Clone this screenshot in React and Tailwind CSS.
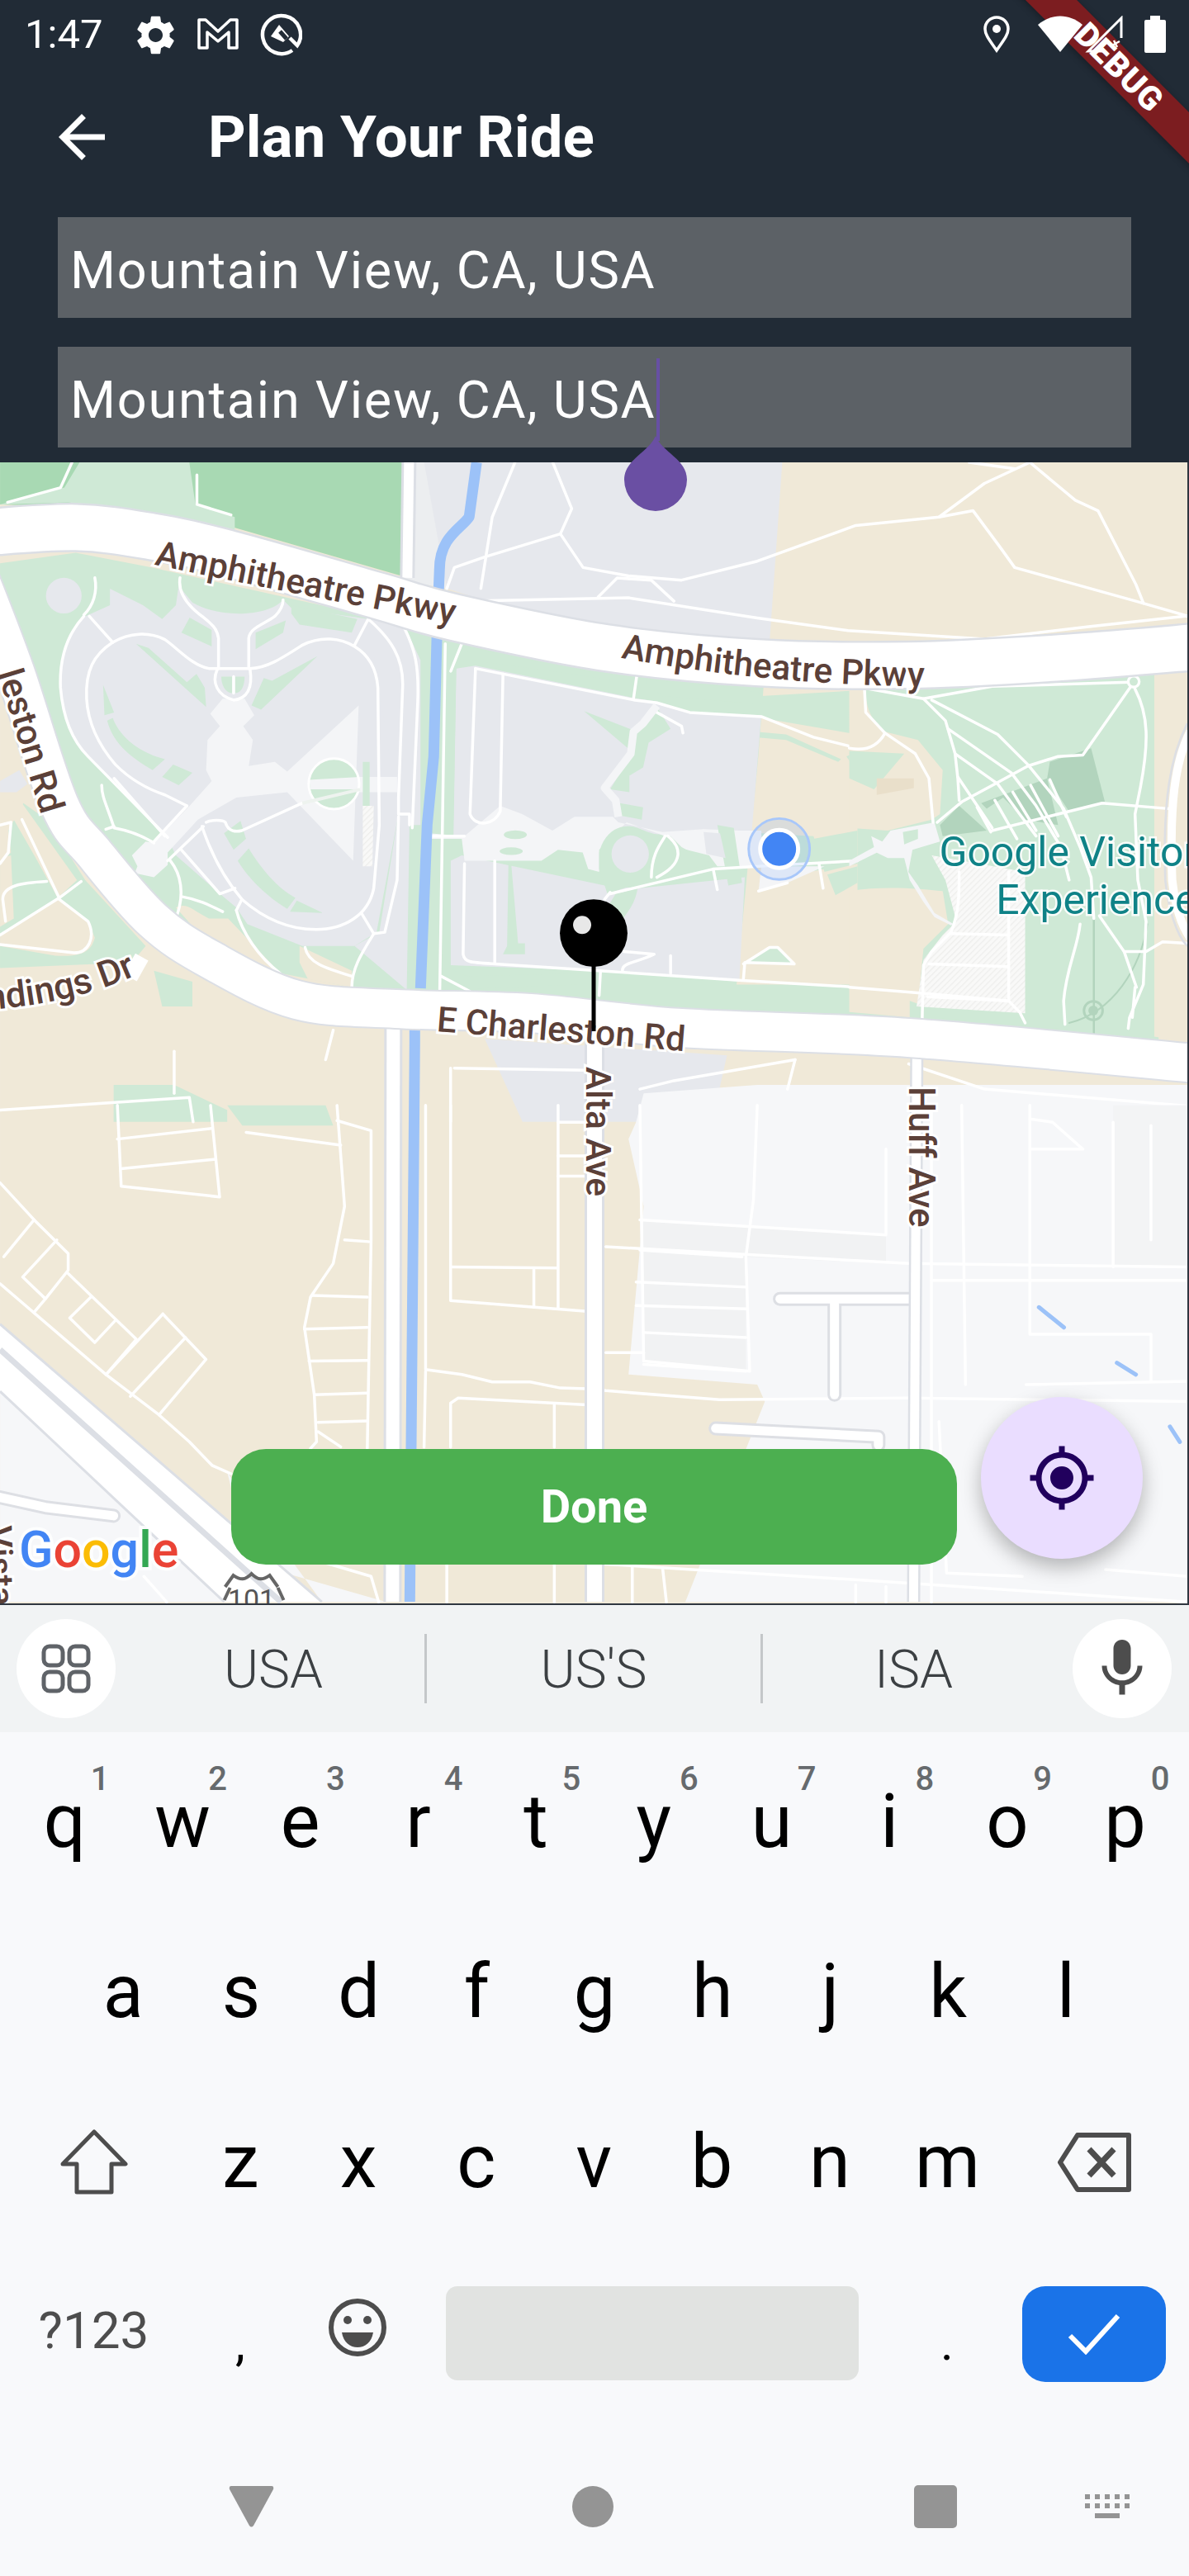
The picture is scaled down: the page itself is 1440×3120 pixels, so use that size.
import { MdArrowBack, MdMic, MdMyLocation, MdSettings } from 'react-icons/md'

const topRow = [['q', 1], ['w', 2], ['e', 3], ['r', 4], ['t', 5], ['y', 6], ['u', 7], ['i', 8], ['o', 9], ['p', 0]]
const midRow = ['a', 's', 'd', 'f', 'g', 'h', 'j', 'k', 'l']
const lowRow = ['z', 'x', 'c', 'v', 'b', 'n', 'm']

const GREEN = '#cfe9d6'
const GREY = '#e6e8ed'
const TAN = '#f0e9d8'
const PLAZA = '#f4f5f7'
const DARK = '#b2d4bd'

// catmull-rom through the points, keeps the big roads from looking polygonal
function smooth(pts) {
  let d = `M${pts[0][0]} ${pts[0][1]}`
  for (let i = 0; i < pts.length - 1; i++) {
    const p0 = pts[i - 1] || pts[i]
    const p1 = pts[i]
    const p2 = pts[i + 1]
    const p3 = pts[i + 2] || p2
    const c1 = [p1[0] + (p2[0] - p0[0]) / 6, p1[1] + (p2[1] - p0[1]) / 6]
    const c2 = [p2[0] - (p3[0] - p1[0]) / 6, p2[1] - (p3[1] - p1[1]) / 6]
    d += ` C${c1[0]} ${c1[1]} ${c2[0]} ${c2[1]} ${p2[0]} ${p2[1]}`
  }
  return d
}

const amphitheatre = smooth([[-20, 645], [92, 639], [184, 650], [275, 670], [459, 722], [551, 748], [735, 785], [918, 803], [1102, 806], [1286, 797], [1460, 783]])
const charleston = smooth([[-25, 700], [18, 813], [72, 975], [115, 1035], [185, 1115], [255, 1163], [360, 1212], [480, 1223], [643, 1228], [826, 1246], [1102, 1258], [1460, 1290]])

// above amphitheatre and below charleston, 1568x1568 crop of y 560-1360
const upperThin = [
  'M730 0 L755 110 L740 170 L770 250 L830 270 L900 280 L1000 235 L1130 150 L1240 130 L1285 115 L1320 200 L1340 250 L1500 330 L1568 365',
  'M1240 130 L1300 50 L1360 0',
  'M1360 0 L1420 90 L1450 115 L1500 290 L1510 335',
  'M1280 0 L1340 15',
  'M740 170 L640 225 L600 250 L590 300',
  'M680 0 L650 130 L635 300',
  'M790 320 L815 275 L860 280 L890 330',
  'M620 330 L830 322 L1000 370 L1120 400 L1300 420 L1440 390 L1568 365',
  'M95 0 L80 60 L10 95',
  'M260 30 L260 100 L305 125',
  'M600 1440 L775 1445',
  'M595 1440 L595 1568',
  'M440 1350 L430 1420',
  'M230 1400 L230 1500',
  'M0 1540 L250 1510 L255 1568',
  'M1200 1430 L1300 1490 L1568 1530',
  'M845 1490 L890 1470 L1050 1420',
  'M1050 1420 L1040 1490',
]

// west campus, 3x crop at (0,700)
const westFills = [
  ['M85 820 L170 880 L310 1100 L530 1340 L480 1400 L0 1420 L0 1040 L40 1000 L30 920Z', GREEN],
  ['M0 800 L80 820 L280 1100 L210 1165 L130 1020 L50 880 L0 860Z', TAN],
  ['M0 1300 L210 1170 L320 1250 L345 1310 C330 1370 280 1380 200 1375 L0 1340Z', TAN],
  ['M0 1020 L40 1010 L50 1240 L0 1270Z', TAN],
  ['M560 1430 L700 1470 L700 1560 L590 1560Z', GREEN],
  ['M0 740 L70 700 L100 750 L60 780 L0 780Z', GREY],
  ['M310 140 C250 190 215 260 220 400 C230 520 280 610 340 670 L600 930 L640 1010 L800 1150 L860 1200 L900 1260 L1100 1340 L1290 1340 L1370 1290 L1450 860 L1470 350 L1340 150 L1060 110 L1030 80 C980 140 800 150 700 90 L650 30 L640 100 L590 150 L520 100 L400 40 L400 100Z', GREY],
  ['M1340 150 L1470 170 L1530 300 L1530 900 L1490 900 L1480 1500 L1290 1340 L1380 1290 L1450 860Z', GREY],
  ['M640 1200 C680 1180 700 1210 760 1240 L830 1240 L1020 1440 L900 1400 L720 1290Z', TAN],
  ['M1090 1340 L1280 1430 L1280 1490 L1120 1460 L1090 1400Z', TAN],
  ['M660 200 L690 145 L770 190 L770 250Z', GREEN],
  ['M930 200 L1040 155 L1030 200 L930 260Z', GREEN],
  ['M1060 100 L1300 150 L1280 200 L1090 170 L1060 130Z', GREEN],
  ['M495 240 L540 255 L680 380 L715 350 L745 400 L750 470Z', GREEN],
  ['M1155 285 L990 375 L960 365 L915 465 L950 480Z', GREEN],
  ['M805 360 L845 360 L845 420 C820 420 805 390 805 360Z', GREEN],
  ['M855 360 L890 360 C890 390 880 420 855 420Z', GREEN],
  ['M375 390 L415 490 L380 500Z', GREEN],
  ['M390 520 L410 510 C440 590 520 640 600 660 L555 700 C470 650 410 600 390 520Z', GREEN],
  ['M630 680 L700 710 L650 755 L590 725Z', GREEN],
  ['M815 930 L875 885 L895 950 L850 990Z', GREEN],
  ['M905 985 C950 1060 1010 1130 1075 1165 L1045 1205 C970 1160 900 1090 865 1030Z', GREEN],
  ['M1080 1175 L1175 1220 L1055 1215Z', GREEN],
  ['M810 440 L890 440 L925 500 L885 540 L920 590 L905 685 L1000 670 L1045 705 L1305 465 L1285 1030 L1045 780 L860 800 L720 880 L610 1000 L610 1045 L560 1090 L490 1075 L500 1050 L480 1010 L530 960 L560 965 L690 830 L770 740 L750 700 L755 590 L800 540 L765 495Z', PLAZA],
  ['M1300 725 L1445 725 L1445 780 L1300 780Z', PLAZA],
  ['M1320 830 L1360 830 L1355 1050 L1320 1050Z', 'url(#hatch)'],
  ['M1320 670 L1345 670 L1345 830 L1320 830Z', GREEN],
]

const westThin = [
  'M410 235 C470 200 540 195 600 225 C650 260 700 320 760 330 L910 330 C970 330 1030 290 1100 245 C1170 210 1240 220 1290 250 C1340 280 1370 330 1375 400 L1380 900 L1360 1130 C1340 1230 1250 1280 1150 1280 C1050 1280 960 1240 880 1170 C820 1100 770 1010 735 905',
  'M410 235 C340 280 310 340 315 440 C320 530 360 610 420 680 C480 740 540 770 600 790 L680 830',
  'M305 140 C250 200 215 280 220 400 C230 520 270 600 320 650 L610 945',
  'M325 140 L410 235',
  'M345 0 C355 50 340 100 305 135',
  'M795 330 L795 220 C790 170 740 150 700 110 C660 70 650 30 655 0',
  'M905 330 L905 220 C910 180 960 170 1000 140 C1030 110 1030 90 1030 80',
  'M790 335 C770 380 790 430 850 445 C900 440 920 400 910 335',
  'M850 360 L850 420',
  'M1290 245 L1340 150 C1420 220 1470 290 1465 400 L1450 800 L1450 860',
  'M1470 180 C1510 260 1525 320 1520 450 L1500 910',
  'M1450 860 L1490 860 L1490 900',
  'M1450 870 L1445 1100 L1400 1290 L1360 1295 L1315 1220',
  'M1360 1295 C1320 1360 1280 1420 1280 1490',
  'M1110 1345 C1120 1400 1180 1420 1280 1450',
  'M860 1210 L880 1170',
  'M860 1210 C880 1290 940 1380 1020 1440',
  'M740 905 L610 1030',
  'M660 990 L800 1150 L855 1130',
  'M620 1030 C660 1080 670 1150 645 1225',
  'M660 1160 C720 1170 760 1190 810 1215',
  'M370 755 C370 800 390 830 415 910 C470 920 520 940 560 965',
  'M385 915 L415 905',
  'M415 730 L600 940',
  'M560 960 L680 830',
  'M750 890 C770 880 810 880 820 890 C830 925 860 925 880 920 L1100 820',
  'M0 900 L40 890 L30 1000 L0 1040',
  'M80 880 L215 1165 L295 1105',
  'M215 1165 L0 1300',
  'M215 1170 L320 1250 C350 1310 320 1365 270 1365 L0 1335',
  'M20 1250 L10 1170 C10 1120 80 1110 170 1105',
]

// central campus, 3x crop at (520,780)
const centralFills = [
  ['M1230 0 L1560 0 L1560 1240 L1120 1240 L1200 400Z', TAN],
  ['M1210 190 L1560 170 L1560 330 L1210 270Z', GREEN],
  ['M1070 310 L1300 330 L1500 420 L1490 430 L1300 350 L1070 330Z', GREEN],
  ['M1520 410 L1560 390 L1560 470Z', GREEN],
  ['M1400 710 L1560 680 L1560 800 L1440 830Z', GREEN],
  ['M1450 840 L1560 810 L1560 870 L1480 915Z', GREEN],
  ['M100 90 L170 80 L760 200 L830 210 L950 250 L1210 260 L1175 690 L90 700Z', GREY],
  ['M80 790 L120 770 L640 880 L760 890 L1150 850 L1130 1230 L700 1190 L620 1190 L80 1170Z', GREY],
  ['M100 30 L170 30 L100 90 L90 640 L50 640 L60 100Z', GREEN],
  ['M130 10 L720 100 L650 175 L660 130 L160 60Z', GREEN],
  ['M790 110 L1210 180 L1210 220 L850 190 L790 150Z', GREEN],
  ['M50 720 L120 720 L70 770 L70 1180 L140 1210 L540 1200 L540 1240 L50 1260Z', GREEN],
  ['M290 790 L420 790 L400 800 L300 800 L325 1090 L350 1090 L350 1130 L270 1130 L285 1100Z', GREEN],
  ['M565 245 L745 315 L730 385Z', GREEN],
  ['M830 230 L880 310 L800 360 L780 450 L730 480 L730 540 L660 530 L740 400 L745 315Z', GREEN],
  ['M695 580 L780 595 L775 640 L695 625Z', GREEN],
  ['M0 690 L130 700 L260 590 L340 620 L450 680 L530 630 L670 630 L690 650 L850 685 L1000 675 L1130 680 L1210 680 L1220 810 L1050 810 L1020 770 L900 740 L860 700 L720 650 L620 750 L620 830 L580 820 L560 760 L470 750 L410 790 L230 790 L130 790 L120 710 L0 710Z', PLAZA],
  ['M620 760 C640 680 700 650 760 670 C830 700 860 700 880 700 L920 740 L1030 800 L800 860 L650 910 L620 820Z', GREEN],
  ['M680 910 L760 890 C750 950 720 980 700 1010 L650 960Z', GREEN],
  ['M1050 660 L1110 670 L1140 870 L1090 880Z', GREEN],
  ['M1000 685 L1060 690 L1080 780 L1010 765Z', GREY],
  ['M1145 1165 L1240 1105 L1270 1105 L1330 1165Z', GREEN],
  ['M1210 690 L1400 700 L1440 820 L1230 860Z', GREEN],
  ['M1210 810 L1400 810 L1440 810 L1305 870 L1200 900Z', PLAZA],
]

const centralThin = [
  'M170 90 L150 620 C170 670 240 660 260 610 L270 110',
  'M170 90 L750 205 L830 215 L950 250 L1210 265 L1400 340 L1560 380',
  'M760 95 L745 200',
  'M830 250 L920 300 L925 325',
  'M660 910 L1035 820 L1200 810 L1560 790',
  'M640 930 L660 905',
  'M130 800 L125 1130 C130 1160 150 1160 240 1165 L620 1190 L1140 1225 L1560 1250',
  'M240 790 L240 1160',
  'M880 1135 L880 1200',
  'M705 1190 C700 1160 760 1160 820 1130 L710 1120',
  'M0 700 L130 700',
  'M60 0 L50 640 L40 1260',
  'M120 0 L80 100',
  'M45 1210 L150 1265',
  'M625 1190 L620 1280',
  'M1145 1165 L1240 1105 L1270 1105 L1330 1165 L1150 1160 L1145 1220',
  'M1035 820 L1050 895',
  'M1200 900 L1305 870',
  'M1420 800 L1435 890',
  'M810 850 C810 760 850 720 860 700',
  'M870 700 C920 740 930 800 830 850',
]

// visitor centre, 3x crop at (1030,800)
const eastFills = [
  ['M0 100 L60 110 C60 200 100 230 130 260 L250 290 L340 400 L330 560 L300 580 L140 620 L0 610Z', TAN],
  ['M0 330 L200 340 L90 470 L0 430Z', GREEN],
  ['M100 430 L235 430 L235 465 L100 490Z', '#e9dfca'],
  ['M0 840 C120 820 250 830 340 840 L360 960 L270 1050 L250 1250 L220 1240 L220 1300 L0 1280Z', TAN],
  ['M1110 45 L1230 30 L1230 1390 L1110 1370Z', TAN],
  ['M730 370 L880 320 L930 515 L800 550 L720 430Z', DARK],
  ['M480 520 L720 430 L760 600 L640 580 L560 500 L500 540Z', DARK],
  ['M330 600 L400 530 L500 620 L340 640Z', DARK],
  ['M300 710 L640 770 L640 1285 L245 1260 L270 1090 L340 1000 L390 950 L350 800Z', 'url(#hatch)'],
  ['M150 620 L310 590 L330 660 L230 690 L215 770 L250 820 L280 870 L310 920 L380 960 L370 965 L310 935 L270 880 L220 800 L200 720 L140 720 L100 700 L0 750 L0 730 L90 680 L80 640 L120 660Z', PLAZA],
  ['M195 625 L250 615 L250 650 L200 670Z', GREEN],
]

const eastThin = [
  'M50 100 L270 140 L520 95 L1020 80',
  'M270 140 L350 220 L385 340 L395 430 L400 510',
  'M300 145 L540 270 L650 380 L780 540 L840 680 L880 790 L890 940',
  'M360 250 L590 410 L680 530 L770 680 L800 800',
  'M385 340 L540 450 L620 560 L680 640',
  'M395 425 L520 610',
  'M320 590 L410 515 L530 450 L650 385 L760 350 L850 345 L1025 95',
  'M1040 105 C1090 200 1090 300 1060 460 L1040 560 L1050 800 L1080 950 L1070 1180 L1020 1300 L1015 1340',
  'M520 620 L720 570 L920 520 L1160 540',
  'M465 535 L515 625',
  'M530 510 L610 650',
  'M595 480 L680 620',
  'M660 455 L760 640',
  'M730 435 L790 570',
  'M910 930 L1000 1060 L1045 1190',
  'M1000 1060 L1080 1060 L1140 1025 L1230 1030',
  'M840 960 C830 1050 790 1120 780 1240 L785 1325',
  'M1040 1190 L1030 1300',
  'M55 100 L60 190 L130 265 L240 340 L290 430 L305 590',
  'M130 265 C100 320 50 330 0 320',
  'M0 1190 L240 1210 L580 1240 L620 1280 L640 1320',
  'M370 995 L580 1000',
  'M290 1105 L580 1115',
  'M285 1225 L580 1240',
  'M580 770 L580 1240',
  'M400 770 C400 850 400 920 370 990 L300 1060 L270 1110 L265 1320',
]

// south of charleston, 1568x1568 crop of y 1340-1980
const lowerThin = [
  'M155 0 L160 240 L290 272 L278 0',
  'M155 100 L280 68',
  'M160 188 L285 160',
  'M325 80 L450 118',
  'M445 45 L490 75 L490 400 L485 1020',
  'M445 0 L455 300 L440 470 L410 570 L402 660 L415 860 L418 1000 L410 1020',
  'M455 400 L487 405',
  'M412 565 L485 570',
  'M402 665 L485 660',
  'M408 760 L485 758',
  'M415 860 L485 855',
  'M420 942 L485 938',
  'M420 970 L450 1015',
  'M0 230 L45 340 L90 440 L90 490 L60 575 L45 615',
  'M45 340 L5 450',
  'M75 400 L30 510 L60 575',
  'M0 530 L140 800 L210 920 L250 1000 L280 1070 L305 1095',
  'M90 500 L180 695 L140 800',
  'M120 570 L92 632 L125 705 L152 640',
  'M215 620 L140 800',
  'M215 620 L272 755 L210 920',
  'M245 690 L172 865',
  'M595 0 L595 580 L775 612',
  'M595 480 L735 483',
  'M705 485 L705 600',
  'M737 0 L737 605',
  'M737 50 L775 50',
  'M737 150 L775 150',
  'M737 210 L775 210',
  'M562 0 L562 785 L610 800 L650 822 L700 822 L740 840 L775 842 L800 848 L950 875 L1200 870 L1568 880',
  'M562 790 L560 1016',
  'M595 1016 L595 885 L605 870 L775 890',
  'M732 890 L732 1016',
  'M590 1360 L590 1476',
  'M732 1360 L732 1476',
  'M775 1360 L1200 1420 L1568 1476',
  'M835 1365 L835 1476',
  'M875 1375 L880 1476',
  'M800 420 L1200 470 L1568 480',
  'M800 735 L850 735',
  'M845 340 L1170 385',
  'M845 430 L980 450',
  'M840 525 L985 540',
  'M840 595 L985 605',
  'M850 675 L985 690',
  'M850 770 L985 790',
  'M845 0 L850 760 L990 790 L985 450 L995 280 L1000 0',
  'M1170 130 L1170 380',
  'M1230 0 L1230 1476',
  'M1270 0 L1275 830',
  'M1360 0 L1360 680 L1520 680 L1520 820',
  'M1470 50 L1470 480',
  'M1520 60 L1520 400',
  'M1360 40 L1390 50 L1430 130 L1360 130',
  'M1240 940 L1250 1390 L1350 1400',
  'M1460 1380 L1568 1400',
  'M1130 1425 L1130 1476',
  'M1170 1430 L1170 1476',
  'M1230 520 L1568 520',
  'M1355 830 L1568 820',
  'M430 1360 L490 1400 L500 1476',
  'M190 1400 L220 1476',
]

function Lines({ paths, width = 3.5, color = '#ffffff' }) {
  return (
    <g fill="none" strokeLinecap="round" strokeLinejoin="round">
      {paths.map((d, i) => (
        <path key={i} d={d} stroke={color} strokeWidth={width} vectorEffect="non-scaling-stroke" />
      ))}
    </g>
  )
}

function Fills({ shapes }) {
  return shapes.map(([d, color], i) => <path key={i} d={d} fill={color} />)
}

function MapLayer() {
  const zoomUpper = 'translate(0 560) scale(0.9184 0.5102)'
  const zoomLower = 'translate(0 1340) scale(0.9184 0.408)'
  const labelStyle = { paintOrder: 'stroke', fontFamily: 'Roboto, sans-serif' }
  return (
    <svg viewBox="0 560 1440 1384" className="block h-full w-full">
      <defs>
        <path id="amph1" d="M187 684 Q340 716 560 758" />
        <path id="amph2" d="M753 797 Q930 830 1130 832" />
        <path id="charl" d="M529 1250 L840 1275" />
        <path id="dings" d="M-16 1224 Q100 1216 186 1172" />
        <pattern id="hatch" width="15" height="15" patternUnits="userSpaceOnUse" patternTransform="rotate(-45)">
          <rect width="15" height="15" fill="#f9f9f8" />
          <rect width="15" height="4" fill="#eeeeec" />
        </pattern>
      </defs>
      <rect x="0" y="560" width="1440" height="1384" fill={TAN} />

      <g transform={zoomUpper}>
        <polygon points="0,0 540,0 530,270 300,150 180,110 0,100" fill="#a8d9b3" />
        <polygon points="85,60 105,0 250,0 258,100 310,130 310,160 200,120 90,95 0,100 10,95" fill={GREEN} />
        <polygon points="555,0 1033,0 1015,460 800,420 590,300" fill={GREY} />
        <polygon points="540,0 560,0 590,300 530,280" fill="#eceef0" />
        <polygon points="0,240 100,215 200,250 500,370 800,470 1000,530 1200,540 1530,500 1530,1375 1200,1340 800,1290 500,1260 300,1190 150,950 60,700 0,300" fill={GREEN} />
        <polygon points="150,1480 230,1480 300,1540 300,1568 150,1568" fill={GREEN} />
        <polygon points="640,1370 960,1410 950,1490 840,1568 690,1568" fill={GREY} />
        <polygon points="850,1500 1000,1480 1568,1480 1568,1568 840,1568" fill="#f6f7f9" />
        <Lines paths={upperThin} />
      </g>

      <g transform="translate(0 700) scale(0.3333)">
        <Fills shapes={westFills} />
        <circle cx="232" cy="65" r="65" fill={GREY} />
        <circle cx="1215" cy="750" r="90" fill={GREEN} />
        <path d="M1125 735 L1310 725 L1310 770 L1130 770Z" fill={PLAZA} />
        <circle cx="1215" cy="750" r="92" fill="none" stroke="#ffffff" strokeWidth="9" />
        <Lines paths={westThin} />
        <path d="M1100 820 L1310 770" stroke="#eef3ef" strokeWidth="12" />
      </g>

      <g transform="translate(520 780) scale(0.3333)">
        <Fills shapes={centralFills} />
        <circle cx="733" cy="765" r="68" fill={GREY} />
        <ellipse cx="315" cy="695" rx="42" ry="16" fill={GREEN} />
        <ellipse cx="300" cy="755" rx="42" ry="14" fill={GREEN} />
        <Lines paths={centralThin} />
        <path d="M830 225 L780 290 L745 320 L735 400 L640 525 L680 570 L690 630" fill="none" stroke={PLAZA} strokeWidth="28" strokeLinejoin="round" />
      </g>

      <g transform="translate(1030 800) scale(0.3333)">
        <Fills shapes={eastFills} />
        <Lines paths={['M890 940 L890 1360']} width={2.5} color={DARK} />
        <Lines paths={['M800 1320 C960 1280 1060 1120 1085 960']} width={2} color={DARK} />
        <circle cx="888" cy="1275" r="34" fill="none" stroke={DARK} strokeWidth="9" />
        <circle cx="888" cy="1275" r="18" fill={DARK} />
        <Lines paths={eastThin} />
        <circle cx="1035" cy="78" r="20" fill={GREEN} stroke="#ffffff" strokeWidth="10" />
        <path d="M1230 230 C1170 350 1140 500 1150 800 C1160 900 1190 1000 1230 1040" fill="none" stroke="#dddfe4" strokeWidth="8" />
        <path d="M1240 260 C1185 370 1165 520 1175 800 C1185 890 1205 960 1240 1010" fill="none" stroke="#ffffff" strokeWidth="30" />
      </g>

      <g transform={zoomLower}>
        <polygon points="850,0 1568,0 1568,1476 905,1476 1010,880 1000,830 830,800 850,300 830,100" fill="#f6f7f9" />
        <polygon points="1568,0 1470,0 1470,480 1568,480" fill="#f3f4f5" />
        <polygon points="0,850 296,1476 0,1476" fill="#f6f7f9" />
        <polygon points="300,1090 330,1360 510,1476 425,1476" fill="#f6f7f9" />
        <polygon points="845,340 1170,385 1170,470 985,450 985,790 850,770" fill="#f1f2f3" />
        <polygon points="300,0 430,0 440,60 320,60" fill={GREEN} />
        <Lines paths={lowerThin} />
        <Lines paths={['M1030 575 L1205 575', 'M1102 590 L1102 860', 'M945 960 L1160 985 L1160 1010', 'M0 1165 L60 1195 L150 1220']} width={17} color="#dddfe4" />
        <Lines paths={['M1030 575 L1205 575', 'M1102 590 L1102 860', 'M945 960 L1160 985 L1160 1010', 'M0 1165 L60 1195 L150 1220']} width={11} />
        <Lines paths={['M1372 600 L1405 660', 'M1475 765 L1500 800', 'M1545 955 L1558 1000']} width={5} color="#9cc2f8" />
        <polygon points="-5,640 425,1476 296,1476 0,850" fill="#ffffff" />
        <path d="M0 726 L371 1476" stroke="#dcdfe5" strokeWidth="7" vectorEffect="non-scaling-stroke" />
        <path d="M0 650 L425 1476 M0 850 L296 1476" stroke="#dcdfe5" strokeWidth="3" vectorEffect="non-scaling-stroke" />
      </g>

      <g fill="none" strokeLinecap="butt" strokeLinejoin="round">
        <path d="M496 560 L494 700" stroke="#dcdfe5" strokeWidth="18" />
        <path d="M496 560 L494 700" stroke="#ffffff" strokeWidth="12" />
        <path d="M477 1230 L476 1942" stroke="#dcdfe5" strokeWidth="22" />
        <path d="M477 1230 L476 1942" stroke="#ffffff" strokeWidth="16" />
        <path d="M578 560 L569 626 C560 640 533 650 533 690 L530 764 L526 917 L518 1000 L510 1198" stroke="#9cc2f8" strokeWidth="13" />
        <path d="M503 1230 L503 1264 L497 1942" stroke="#9cc2f8" strokeWidth="13" />
        <path d="M721 1240 L721 1942" stroke="#dcdfe5" strokeWidth="24" />
        <path d="M721 1240 L721 1942" stroke="#ffffff" strokeWidth="18" />
        <path d="M1112 1260 L1108 1942" stroke="#dcdfe5" strokeWidth="16" />
        <path d="M1112 1260 L1108 1942" stroke="#ffffff" strokeWidth="11" />
        <path d={amphitheatre} stroke="#dcdfe5" strokeWidth="60" />
        <path d={amphitheatre} stroke="#ffffff" strokeWidth="55" />
        <path d={charleston} stroke="#dcdfe5" strokeWidth="50" />
        <path d={charleston} stroke="#ffffff" strokeWidth="46" />
        <path d="M172 1160 L158 1185" stroke="#ffffff" strokeWidth="18" />
      </g>

      <g fill="#5b4038" stroke="#ffffff" strokeWidth="6" fontSize="42.5" fontWeight="500" style={labelStyle}>
        <text><textPath href="#amph1">Amphitheatre Pkwy</textPath></text>
        <text><textPath href="#amph2">Amphitheatre Pkwy</textPath></text>
        <text><textPath href="#charl">E Charleston Rd</textPath></text>
        <text fontSize="44"><textPath href="#dings">ndings Dr</textPath></text>
        <text textAnchor="end" fontSize="43" transform="translate(50 988) rotate(73)">leston Rd</text>
        <text transform="translate(711 1293) rotate(90)">Alta Ave</text>
        <text fontSize="44" transform="translate(1103 1317) rotate(90)">Huff Ave</text>
        <text transform="translate(-16 1850) rotate(88)">Vista</text>
      </g>
      <g fill="#0f8287" stroke="#ffffff" strokeOpacity="0.85" strokeWidth="5" fontSize="50" style={labelStyle}>
        <text x="1139" y="1050">Google Visitor</text>
        <text x="1208" y="1108">Experience</text>
      </g>

      <path d="M279 1925 L272 1940 M337 1925 L344 1940 M273 1924 L283 1910 C292 1916 297 1916 305 1908 C313 1916 318 1916 327 1910 L337 1924" fill="none" stroke="#666666" strokeWidth="4" />
      <text x="305" y="1951" textAnchor="middle" fontSize="34" fill="#555555" style={{ fontFamily: 'Roboto, sans-serif' }}>101</text>

      <text x="23" y="1900" fontSize="61" fontWeight="500" stroke="#ffffff" strokeOpacity="0.8" strokeWidth="8" style={labelStyle}>
        <tspan fill="#4285f4">G</tspan>
        <tspan fill="#ea4335">o</tspan>
        <tspan fill="#fbbc05">o</tspan>
        <tspan fill="#4285f4">g</tspan>
        <tspan fill="#34a853">l</tspan>
        <tspan fill="#ea4335">e</tspan>
      </text>

      <circle cx="945" cy="1029" r="37" fill="#4285f4" fillOpacity="0.12" stroke="#a8c7fa" strokeWidth="3" />
      <circle cx="945" cy="1029" r="23" fill="#4285f4" stroke="#ffffff" strokeWidth="5" />

      <path d="M720 1170 L720 1250" stroke="#000000" strokeWidth="5" />
      <circle cx="720" cy="1131" r="41" fill="#000000" />
      <circle cx="706" cy="1121" r="11" fill="#e8e8e8" />
    </svg>
  )
}

function Key({ label, digit }) {
  return (
    <div className="relative h-[206px] w-[142.7px] text-center text-[90px] leading-[206px] text-black">
      {label}
      {digit !== undefined && (
        <span className="absolute left-[100px] top-[29px] w-[28px] text-center text-[40px] font-medium leading-[44px] text-[#666a6d]">{digit}</span>
      )}
    </div>
  )
}

function ShiftIcon() {
  return (
    <svg width="84" height="80" viewBox="0 0 84 80" fill="none" stroke="#4d4d4d" strokeWidth="5" strokeLinejoin="round">
      <path d="M42 3 L80 42 L63 42 L63 76 L21 76 L21 42 L4 42 Z" />
    </svg>
  )
}

function BackspaceIcon() {
  return (
    <svg width="90" height="72" viewBox="0 0 90 72" fill="none" stroke="#4d4d4d" strokeWidth="6" strokeLinejoin="round">
      <path d="M3 36 L24 3 L86 3 L86 69 L24 69 Z" />
      <path d="M38 20 L68 52 M68 20 L38 52" strokeWidth="7" />
    </svg>
  )
}

function EmojiIcon() {
  return (
    <svg width="72" height="72" viewBox="0 0 72 72">
      <circle cx="36" cy="36" r="32" fill="none" stroke="#4d4d4d" strokeWidth="6" />
      <circle cx="24" cy="27" r="5" fill="#4d4d4d" />
      <circle cx="48" cy="27" r="5" fill="#4d4d4d" />
      <path d="M17 42 L55 42 C53 54 45 60 36 60 C27 60 19 54 17 42Z" fill="#4d4d4d" />
    </svg>
  )
}

function StatusBar() {
  return (
    <div className="relative flex h-[84px] items-center text-white">
      <span className="ml-[30px] w-[130px] text-[49px] leading-[84px]">1:47</span>
      <MdSettings size={57} />
      <svg width="52" height="44" viewBox="0 0 52 44" className="ml-[21px]" fill="none" stroke="#ffffff" strokeWidth="3.5" strokeLinejoin="round">
        <path d="M3 4 L11 4 L26 18 L41 4 L49 4 L49 38 L39 38 L39 19 L26 30 L13 19 L13 38 L3 38 Z" />
      </svg>
      <svg width="52" height="52" viewBox="0 0 52 52" className="ml-[24px]" fill="none" stroke="#ffffff">
        <path d="M40 45 A23 23 0 1 1 46 39 L37 30" strokeWidth="4.5" />
        <path d="M24 14 L36 28 L29 35 L14 28 Z" fill="#ffffff" stroke="none" />
        <path d="M25 22 L33 31" stroke="#212b36" strokeWidth="5" />
      </svg>
      <svg width="34" height="46" viewBox="0 0 34 46" className="absolute left-[1190px] top-[18px]" fill="none" stroke="#ffffff" strokeWidth="3.5">
        <path d="M17 43 C8 30 3 24 3 17 A14 14 0 0 1 31 17 C31 24 26 30 17 43 Z" />
        <circle cx="17" cy="17" r="5" fill="#ffffff" stroke="none" />
      </svg>
      <svg width="54" height="44" viewBox="0 0 54 44" className="absolute left-[1257px] top-[19px] z-20">
        <path d="M0 11 C16 -3 38 -3 54 11 L27 44 Z" fill="#ffffff" />
      </svg>
      <svg width="50" height="46" viewBox="0 0 50 46" className="absolute left-[1313px] top-[19px] z-20" fill="none" stroke="#ffffff" strokeWidth="3">
        <path d="M45 27 L45 3 L5 43 L24 43" />
        <path d="M32 37 L43 31 M36 30 L40 38" strokeWidth="2.5" />
      </svg>
      <svg width="28" height="46" viewBox="0 0 28 46" className="absolute left-[1385px] top-[19px]">
        <path d="M8 0 L20 0 L20 5 L25 5 Q27 5 27 7 L27 43 Q27 45 25 45 L3 45 Q1 45 1 43 L1 7 Q1 5 3 5 L8 5 Z" fill="#ffffff" />
      </svg>
    </div>
  )
}

export default function App() {
  return (
    <div className="relative flex h-[3120px] w-[1440px] flex-col overflow-hidden bg-[#f8f9fb] [font-family:Roboto,sans-serif]">
      <header className="flex h-[560px] flex-col bg-[#212b36]">
        <StatusBar />
        <div className="flex h-[163px] items-center">
          <MdArrowBack size={84} className="ml-[57px] text-white" />
          <h1 className="ml-[111px] text-[71px] font-bold leading-[80px] text-white">Plan Your Ride</h1>
        </div>
        <div className="flex flex-col gap-[35px] pl-[70px] pr-[70px] pt-[16px]">
          {[0, 1].map((i) => (
            <div key={i} className="h-[122px] bg-[#5c6166] pl-[15px] text-[63px] leading-[130px] tracking-[1.75px] text-white">
              Mountain View, CA, USA
            </div>
          ))}
        </div>
      </header>

      <main className="relative h-[1384px] border-b-2 border-r-2 border-[#2f3640]">
        <MapLayer />
        <button className="absolute left-[280px] top-[1195px] h-[140px] w-[879px] rounded-[42px] bg-[#4caf50] text-[56px] font-bold text-white">
          Done
        </button>
        <div className="absolute left-[1188px] top-[1132px] flex h-[196px] w-[196px] items-center justify-center rounded-full bg-[#eaddff] shadow-[0_10px_24px_rgba(0,0,0,0.28)]">
          <MdMyLocation size={84} className="text-[#21005d]" />
        </div>
      </main>

      <section className="flex h-[154px] items-center justify-between bg-[#f1f3f4] pl-[20px] pr-[21px]">
        <div className="flex h-[120px] w-[120px] items-center justify-center rounded-full bg-white">
          <svg width="60" height="60" viewBox="0 0 60 60" fill="none" stroke="#5f6368" strokeWidth="5">
            <rect x="3" y="3" width="23" height="23" rx="7" />
            <rect x="34" y="3" width="23" height="23" rx="7" />
            <rect x="3" y="34" width="23" height="23" rx="7" />
            <rect x="34" y="34" width="23" height="23" rx="7" />
          </svg>
        </div>
        <div className="flex flex-1 items-center text-center text-[64px] font-light leading-[84px] text-[#3c4043]">
          <span className="w-[374px] pl-[8px] pt-[4px]">USA</span>
          <span className="h-[84px] w-[3px] bg-[#c4c7c9]" />
          <span className="w-[404px] pt-[4px]">US'S</span>
          <span className="h-[84px] w-[3px] bg-[#c4c7c9]" />
          <span className="flex-1 pr-[10px] pt-[4px]">ISA</span>
        </div>
        <div className="flex h-[120px] w-[120px] items-center justify-center rounded-full bg-white">
          <MdMic size={84} className="text-[#4d4d4d]" />
        </div>
      </section>

      <section className="flex-1 bg-[#f8f9fb] pt-[6px]">
        <div className="flex pl-[7px]">
          {topRow.map(([k, d]) => (
            <Key key={k} label={k} digit={d} />
          ))}
        </div>
        <div className="flex pl-[78px]">
          {midRow.map((k) => (
            <Key key={k} label={k} />
          ))}
        </div>
        <div className="flex items-center pl-[7px]">
          <div className="flex w-[213px] justify-center">
            <ShiftIcon />
          </div>
          {lowRow.map((k) => (
            <Key key={k} label={k} />
          ))}
          <div className="flex w-[214px] justify-center">
            <BackspaceIcon />
          </div>
        </div>
        <div className="flex h-[206px] items-start pl-[7px] pt-[47px] text-[#4d4d4d]">
          <div className="flex h-[116px] w-[213px] items-center justify-center pb-[10px] text-[62px]">?123</div>
          <div className="flex h-[116px] w-[142px] items-center justify-center pt-[22px] text-[60px] text-black">,</div>
          <div className="flex h-[116px] w-[142px] items-center justify-center pb-[16px]">
            <EmojiIcon />
          </div>
          <div className="ml-[36px] h-[114px] w-[500px] rounded-[14px] bg-[#e1e3e1]" />
          <div className="ml-[36px] flex h-[116px] w-[142px] items-center justify-center pt-[22px] text-[60px] text-black">.</div>
          <div className="ml-[20px] flex h-[116px] w-[174px] items-center justify-center rounded-[28px] bg-[#1a73e8]">
            <svg width="64" height="50" viewBox="0 0 64 50" fill="none" stroke="#ffffff" strokeWidth="6">
              <path d="M3 27 L22 46 L61 3" />
            </svg>
          </div>
        </div>
        <nav className="flex items-center pl-[277px] pt-[82px]">
          <svg width="55" height="50" viewBox="0 0 55 50">
            <path d="M3 0 L52 0 Q55 0 54 4 L30 48 Q27.5 51 25 48 L1 4 Q0 0 3 0Z" fill="#949494" />
          </svg>
          <span className="ml-[361px] h-[50px] w-[50px] rounded-full bg-[#949494]" />
          <span className="ml-[364px] h-[52px] w-[52px] rounded-[5px] bg-[#949494]" />
          <svg width="54" height="30" viewBox="0 0 54 30" className="ml-[155px]" fill="#949494">
            {[0, 12, 24, 36, 48].map((x) => (
              <g key={x}>
                <rect x={x} y="0" width="6" height="6" />
                <rect x={x} y="11" width="6" height="6" />
              </g>
            ))}
            <rect x="12" y="23" width="30" height="6" />
          </svg>
        </nav>
      </section>

      {/* flutter debug ribbon */}
      <div className="absolute left-[1155px] top-[60px] flex h-[44px] w-[400px] rotate-45 items-center justify-center bg-[#7c1d20] text-[40px] font-black tracking-[1px] text-white shadow-[0_2px_8px_rgba(0,0,0,0.3)]">
        DEBUG
      </div>

      {/* text cursor handle, sits over the field and the map */}
      <svg width="76" height="186" viewBox="0 0 76 186" className="absolute left-[756px] top-[434px]">
        <rect x="39" y="0" width="4" height="100" fill="#6750a4" />
        <path d="M38 94 C30 114 0 122 0 147 A38 38 0 0 0 76 147 C76 122 46 114 38 94Z" fill="#6a4fa3" />
      </svg>
    </div>
  )
}
